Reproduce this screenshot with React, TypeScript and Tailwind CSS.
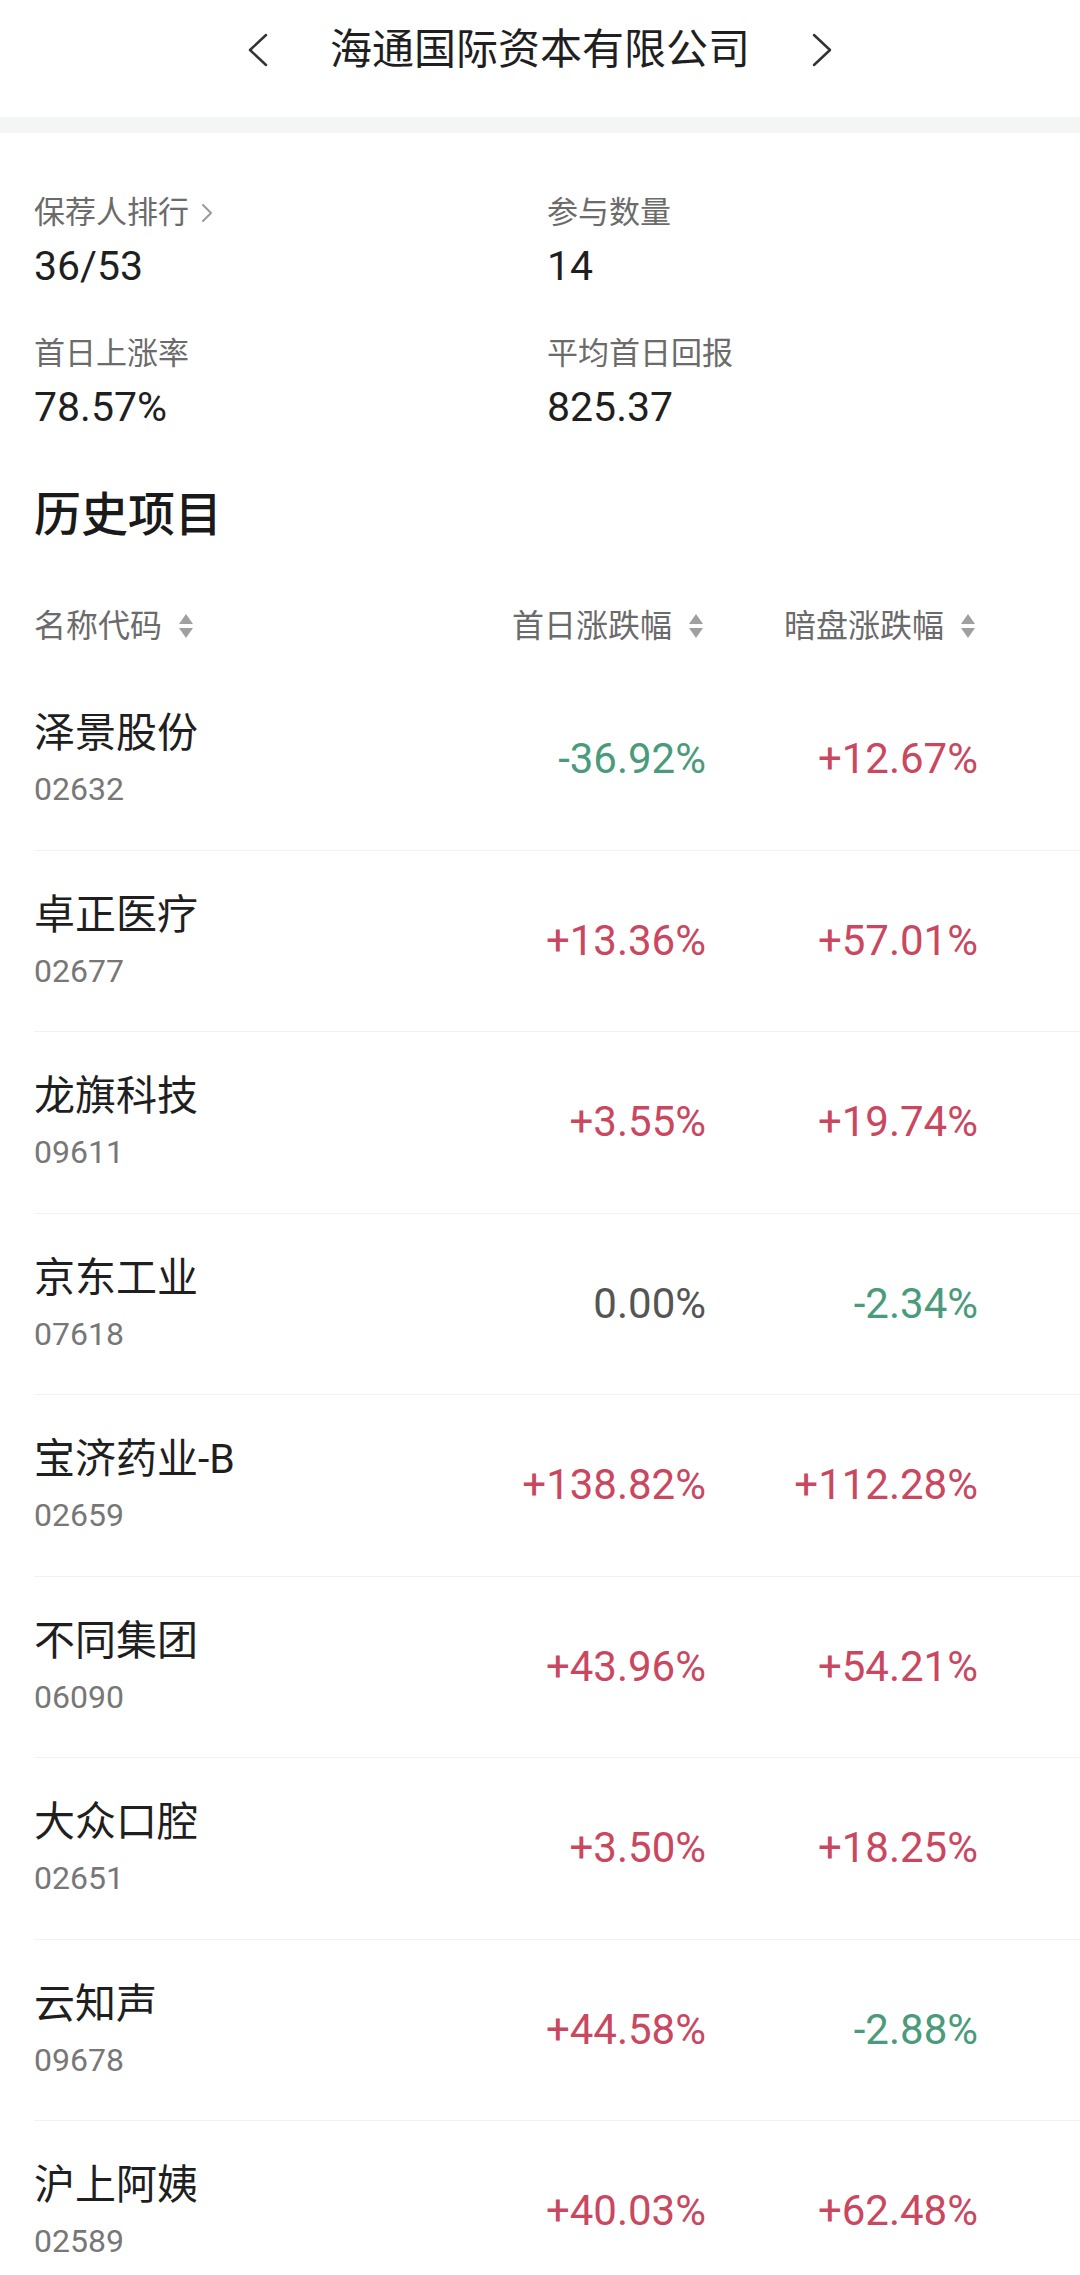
import React from 'react';

type Row = {
  name: string;
  code: string;
  firstDay: string;
  grey: string;
};

const rows: Row[] = [
  { name: '泽景股份', code: '02632', firstDay: '-36.92%', grey: '+12.67%' },
  { name: '卓正医疗', code: '02677', firstDay: '+13.36%', grey: '+57.01%' },
  { name: '龙旗科技', code: '09611', firstDay: '+3.55%', grey: '+19.74%' },
  { name: '京东工业', code: '07618', firstDay: '0.00%', grey: '-2.34%' },
  { name: '宝济药业-B', code: '02659', firstDay: '+138.82%', grey: '+112.28%' },
  { name: '不同集团', code: '06090', firstDay: '+43.96%', grey: '+54.21%' },
  { name: '大众口腔', code: '02651', firstDay: '+3.50%', grey: '+18.25%' },
  { name: '云知声', code: '09678', firstDay: '+44.58%', grey: '-2.88%' },
  { name: '沪上阿姨', code: '02589', firstDay: '+40.03%', grey: '+62.48%' },
];

const font = { fontFamily: 'Roboto, "Noto Sans CJK SC", sans-serif' };

function tone(value: string) {
  if (value.startsWith('+')) return 'text-[#c9485f]';
  if (value.startsWith('-')) return 'text-[#4a9b7c]';
  return 'text-[#555555]';
}

function SortIcon() {
  return (
    <svg width="16" height="26" viewBox="0 0 16 26" className="ml-[16px] shrink-0">
      <path d="M8 1 L15 11 L1 11 Z" fill="#a0a0a0" />
      <path d="M1 15 L15 15 L8 25 Z" fill="#a0a0a0" />
    </svg>
  );
}

function Chevron({ dir }: { dir: 'left' | 'right' }) {
  return (
    <svg width="22" height="34" viewBox="0 0 22 34" fill="none">
      <polyline
        points={dir === 'left' ? '19,2 3,17 19,32' : '3,2 19,17 3,32'}
        stroke="#333333"
        strokeWidth="2.5"
        strokeLinecap="round"
        strokeLinejoin="round"
      />
    </svg>
  );
}

function Stat({ label, value, arrow }: { label: string; value: string; arrow?: boolean }) {
  return (
    <div className="flex flex-col gap-[8px]">
      <div className="flex items-center text-[31px] leading-[40px] text-[#6b6b6b]">
        {label}
        {arrow ? (
          <svg width="12" height="20" viewBox="0 0 12 20" fill="none" className="ml-[12px]">
            <polyline points="2,2 10,10 2,18" stroke="#9a9a9a" strokeWidth="2" strokeLinecap="round" strokeLinejoin="round" />
          </svg>
        ) : null}
      </div>
      <div className="text-[41px] leading-[50px] text-[#1f1f1f]">{value}</div>
    </div>
  );
}

export default function App() {
  return (
    <div className="h-[2275px] w-[1080px] overflow-hidden bg-white" style={font}>
      <header className="flex h-[100px] items-center justify-center gap-[61px]">
        <Chevron dir="left" />
        <h1 className="text-[42px] leading-[56px] font-normal text-[#1f1f1f]">海通国际资本有限公司</h1>
        <Chevron dir="right" />
      </header>
      <div className="h-[17px]" />
      <div className="h-[16px] bg-[#f4f6f5]" />

      <section className="grid grid-cols-[513px_1fr] gap-y-[43px] pl-[34px] pt-[60px]">
        <Stat label="保荐人排行" value="36/53" arrow />
        <Stat label="参与数量" value="14" />
        <Stat label="首日上涨率" value="78.57%" />
        <Stat label="平均首日回报" value="825.37" />
      </section>

      <h2 className="mt-[53px] pl-[34px] text-[47px] leading-[60px] font-medium text-[#1a1a1a]">历史项目</h2>

      <div className="mt-[61px] pl-[34px]">
        <div className="grid grid-cols-[1fr_272px_272px] pr-[104px] text-[32px] leading-[40px] text-[#6b6b6b]">
          <div className="flex items-center">
            名称代码
            <SortIcon />
          </div>
          <div className="flex items-center justify-end">
            首日涨跌幅
            <SortIcon />
          </div>
          <div className="flex items-center justify-end">
            暗盘涨跌幅
            <SortIcon />
          </div>
        </div>

        <div className="mt-[23px]">
          {rows.map((row) => (
            <div
              key={row.code}
              className="grid h-[181.5px] grid-cols-[1fr_272px_272px] items-center border-b border-[#f1f1f1] pr-[102px]"
            >
              <div className="flex flex-col gap-[12px]">
                <div className="text-[41px] leading-[48px] text-[#1f1f1f]">{row.name}</div>
                <div className="text-[32px] leading-[40px] text-[#777777]">{row.code}</div>
              </div>
              <div className={`text-right text-[42px] leading-[50px] ${tone(row.firstDay)}`}>{row.firstDay}</div>
              <div className={`text-right text-[42px] leading-[50px] ${tone(row.grey)}`}>{row.grey}</div>
            </div>
          ))}
        </div>
      </div>
    </div>
  );
}
